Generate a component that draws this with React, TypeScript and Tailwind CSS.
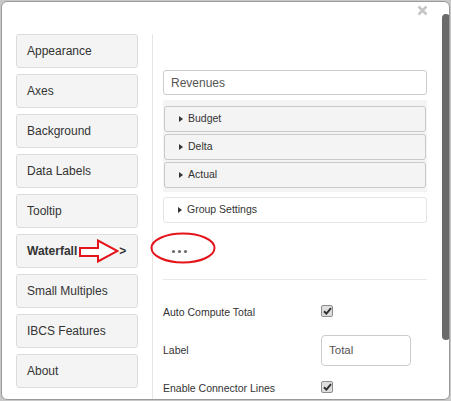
import React from "react";

const navItems = [
  "Appearance",
  "Axes",
  "Background",
  "Data Labels",
  "Tooltip",
  "Waterfall",
  "Small Multiples",
  "IBCS Features",
  "About",
];

function Triangle() {
  return (
    <span className="inline-block w-0 h-0 border-y-[3.5px] border-y-transparent border-l-[4px] border-l-[#333]" />
  );
}

function Check() {
  return (
    <span className="flex items-center justify-center w-[12px] h-[12px] border border-[#8e8e8e] bg-[#dedede] rounded-[2px]">
      <svg width="9" height="8" viewBox="0 0 9 8">
        <path d="M1 4.2 L3.4 6.6 L8 1.2" fill="none" stroke="#333" strokeWidth="2" />
      </svg>
    </span>
  );
}

export default function App() {
  return (
    <div className="w-[451px] h-[401px] bg-[#c8c8c8] pt-px pl-px overflow-hidden font-['Liberation_Sans',Arial,sans-serif]">
      <div className="relative w-[449px] h-[399px] bg-white border border-[#9a9a9a] rounded-[6px] overflow-hidden flex pt-[32px] pl-[14px]">
        {/* left nav */}
        <div className="flex flex-col gap-[6px] w-[122px] shrink-0">
          {navItems.map((n) => (
            <div
              key={n}
              className="h-[34px] flex items-center pl-[10px] border border-[#dcdcdc] rounded-[3px] bg-[#f4f4f4] text-[12px] text-[#333]"
            >
              {n === "Waterfall" ? (
                <>
                  <span className="font-bold">Waterfall</span>
                  <svg width="40" height="24" viewBox="0 0 40 24" className="ml-[2px] shrink-0">
                    <polygon
                      points="1,9 19,9 19,1.5 38.5,12 19,22.5 19,17 1,17"
                      fill="white"
                      stroke="#e4141b"
                      strokeWidth="2"
                    />
                  </svg>
                  <span className="font-bold">&gt;</span>
                </>
              ) : (
                n
              )}
            </div>
          ))}
        </div>

        {/* divider */}
        <div className="ml-[14px] w-px bg-[#e6e6e6] self-stretch shrink-0" />

        {/* right panel */}
        <div className="ml-[10px] w-[264px] pt-[36px] flex flex-col shrink-0">
          <div className="h-[25px] border border-[#cccccc] rounded-[3px] flex items-center px-[7px] text-[12px] text-[#555]">
            Revenues
          </div>

          <div className="mt-[5px] bg-[#f4f4f4] px-[1px] pt-[6px] pb-[4px] flex flex-col gap-[2px]">
            {["Budget", "Delta", "Actual"].map((t) => (
              <div
                key={t}
                className="h-[26px] border border-[#c9c9c9] rounded-[3px] bg-[#f4f4f4] flex items-center gap-[5px] pl-[14px] text-[10.5px] text-[#333]"
              >
                <Triangle />
                {t}
              </div>
            ))}
          </div>

          <div className="mt-[5px] h-[26px] border border-[#e4e4e4] rounded-[3px] bg-white flex items-center gap-[5px] pl-[14px] text-[10.5px] text-[#333]">
            <Triangle />
            Group Settings
          </div>

          <div className="h-[56px] flex items-center gap-[3px] pl-[9px]">
            <span className="w-[3px] h-[3px] rounded-full bg-[#666]" />
            <span className="w-[3px] h-[3px] rounded-full bg-[#666]" />
            <span className="w-[3px] h-[3px] rounded-full bg-[#666]" />
          </div>

          <div className="h-px bg-[#e8e8e8]" />

          <div className="mt-[23px] h-[20px] flex items-center text-[10.5px] text-[#333]">
            <span className="w-[158px]">Auto Compute Total</span>
            <span className="self-start mt-[2px]">
              <Check />
            </span>
          </div>

          <div className="mt-[12px] h-[31px] flex items-center text-[10.5px] text-[#333]">
            <span className="w-[158px]">Label</span>
            <div className="w-[90px] h-[31px] border border-[#cccccc] rounded-[4px] flex items-center pl-[7px] text-[11.5px] text-[#555]">
              Total
            </div>
          </div>

          <div className="mt-[15px] h-[16px] flex items-center text-[10.5px] text-[#333]">
            <span className="w-[158px]">Enable Connector Lines</span>
            <span className="self-start">
              <Check />
            </span>
          </div>
        </div>

        {/* annotation ellipse */}
        <svg
          width="66"
          height="33"
          viewBox="0 0 66 33"
          className="absolute left-[148px] top-[230px]"
        >
          <ellipse cx="33" cy="16" rx="31.5" ry="14.5" fill="none" stroke="#e4141b" strokeWidth="2" />
        </svg>

        {/* close */}
        <svg
          width="11"
          height="11"
          viewBox="0 0 11 11"
          className="absolute left-[415px] top-[3px]"
        >
          <path d="M1.5 1.5 L9.5 9.5 M9.5 1.5 L1.5 9.5" stroke="#c6c6c6" strokeWidth="2.6" />
        </svg>

        {/* scrollbar thumb */}
        <div className="absolute -right-px top-[12px] w-[8px] h-[326px] rounded-[4px] bg-[#6a6a6a]" />
      </div>
    </div>
  );
}
